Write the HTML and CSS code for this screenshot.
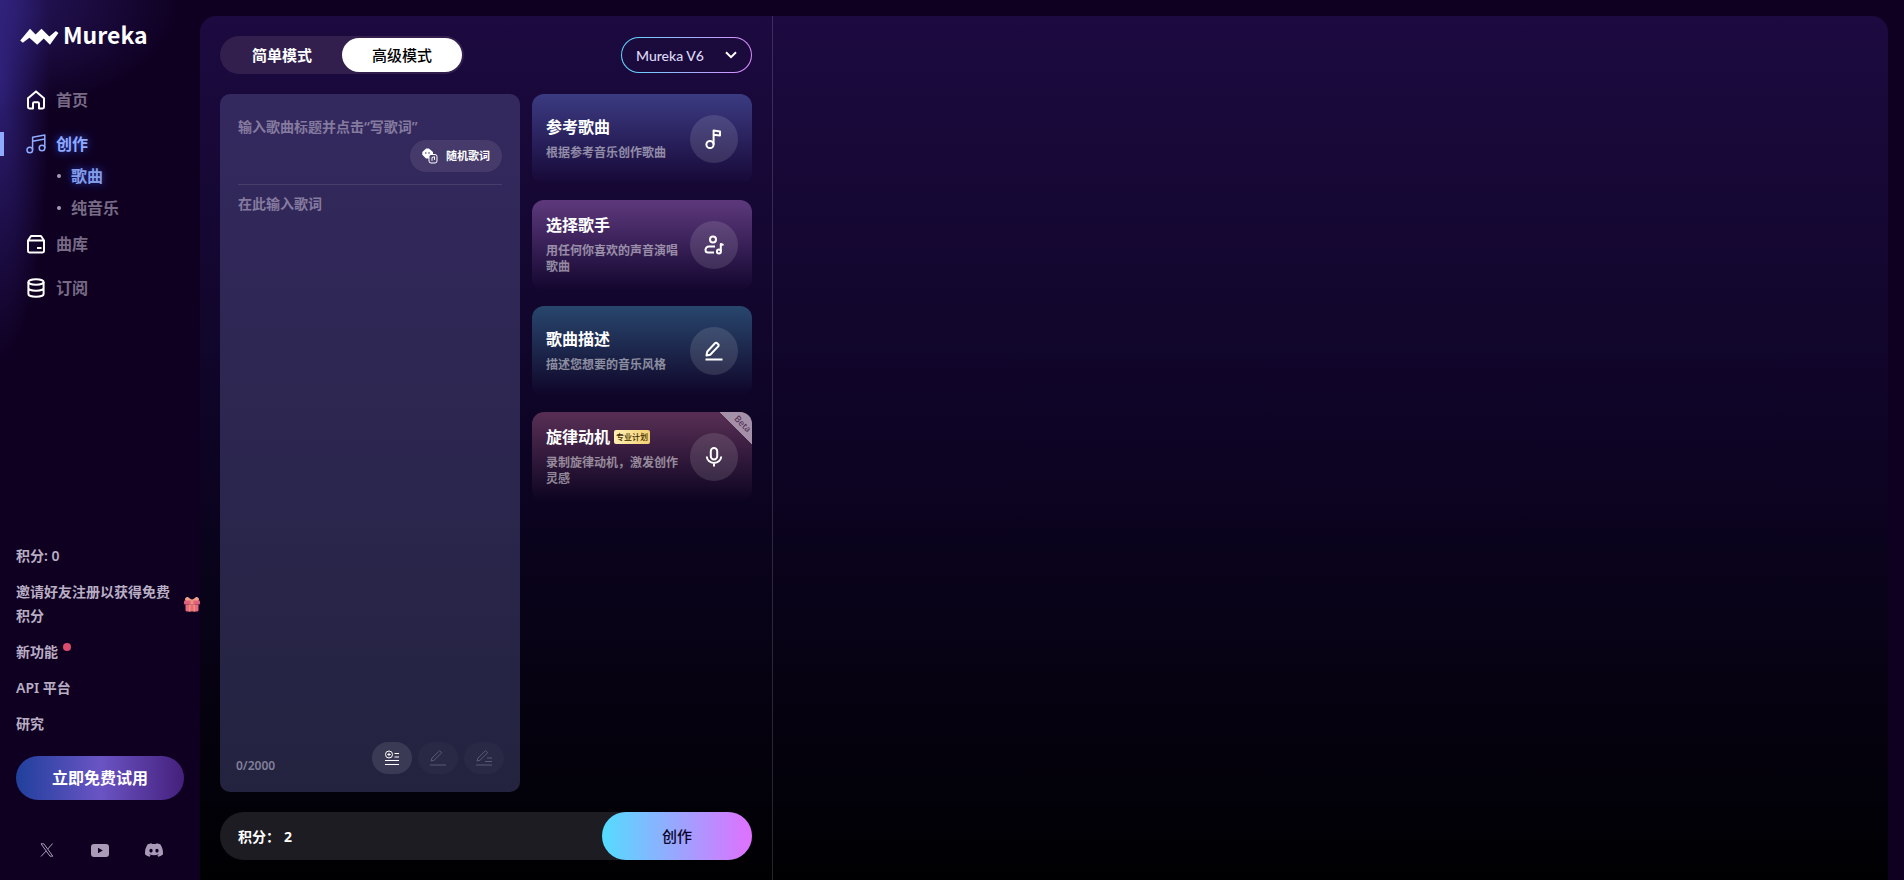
FILE: index.html
```html
<!DOCTYPE html>
<html lang="zh-CN">
<head>
    <meta charset="UTF-8">
    <meta name="viewport" content="width=device-width, initial-scale=1.0">
    <title>Mureka</title>
    <link rel="stylesheet" href="styles.css">
</head>
<body>
    <div class="app">
        <!-- 侧边栏 -->
        <aside class="sidebar">
            <a href="#" class="logo">
                <svg width="39" height="17" viewBox="60 82 118 52" fill="#fff"><path d="M60 120 90 84 107 102 125 84 149 108 169 91 177 97 151 133 132 114 112 133 88 112 68 127Z"/></svg>
                <span>Mureka</span>
            </a>
            <nav>
                <a href="#" class="nav-item">
                    <svg class="icon" viewBox="0 0 20 20"><path d="M2 8.2 10 1.4l8 6.8V17a1.4 1.4 0 0 1-1.4 1.4H13v-5a1.2 1.2 0 0 0-1.2-1.2H8.2A1.2 1.2 0 0 0 7 13.4v5H3.4A1.4 1.4 0 0 1 2 17Z"/></svg>
                    <span>首页</span>
                </a>
                <a href="#" class="nav-item active">
                    <svg class="icon" viewBox="0 0 20 20"><circle cx="3.8" cy="16" r="2.8"/><circle cx="16" cy="14" r="2.8"/><path d="M6.6 16V3.2L18.8 1v13M6.6 7.2 18.8 5"/></svg>
                    <span>创作</span>
                </a>
                <div class="sub-nav">
                    <a href="#" class="active">歌曲</a>
                    <a href="#">纯音乐</a>
                </div>
                <a href="#" class="nav-item">
                    <svg class="icon" viewBox="0 0 20 20"><path d="M2 6.5 5 2h10l3 4.5v10.6a1.4 1.4 0 0 1-1.4 1.4H3.4A1.4 1.4 0 0 1 2 17.1ZM2 6.5h16M11 14h4.5"/></svg>
                    <span>曲库</span>
                </a>
                <a href="#" class="nav-item">
                    <svg class="icon" viewBox="0 0 20 20"><ellipse cx="10" cy="4" rx="7.6" ry="2.8"/><path d="M2.4 4v12c0 1.6 3.4 2.8 7.6 2.8s7.6-1.2 7.6-2.8V4M2.4 10c0 1.6 3.4 2.8 7.6 2.8s7.6-1.2 7.6-2.8"/></svg>
                    <span>订阅</span>
                </a>
            </nav>
            <div class="side-links">
                <span>积分: 0</span>
                <a href="#" class="invite">
                    <span>邀请好友注册以获得免费积分</span>
                    <svg width="16" height="16" viewBox="0 0 16 16"><path fill="#f0a08c" d="M1 3.5C1 1.5 3 .5 4.5 1.5L8 4l3.5-2.5c1.5-1 3.5 0 3.5 2L14.5 5h-13Z"/><rect fill="#e0607c" y="4.5" width="16" height="4" rx="1"/><path fill="#e8687c" d="M1.5 8.5h13V14a1.5 1.5 0 0 1-1.5 1.5H3A1.5 1.5 0 0 1 1.5 14Z"/><path fill="#f09078" d="M6.5 3.5h3v5h-3ZM5 8.5h1.5v7H5ZM9.500 8.500H11v7H9.500Z"/></svg>
                </a>
                <a href="#" class="new-feature">新功能<i class="dot"></i></a>
                <a href="#">API 平台</a>
                <a href="#">研究</a>
            </div>
            <button class="trial-button">立即免费试用</button>
            <div class="social">
                <a href="#" aria-label="X"><svg width="14" height="14" viewBox="0 0 14 14" fill="none" stroke="#a99bb8"><path d="M1 .8h2.8l9 12.4H10ZM12.6.5 7.8 6M6.2 7.9 1 13.5"/></svg></a>
                <a href="#" aria-label="YouTube"><svg width="18" height="13" viewBox="0 0 18 13"><rect width="18" height="13" rx="3" fill="#a99bb8"/><path fill="#0f0022" d="M7 3.8v5.4l4.8-2.7Z"/></svg></a>
                <a href="#" aria-label="Discord"><svg width="18" height="18" viewBox="0 0 24 24" fill="#a99bb8"><path d="M20.317 4.3698a19.7913 19.7913 0 00-4.8851-1.5152.0741.0741 0 00-.0785.0371c-.211.3753-.4447.8648-.6083 1.2495-1.8447-.2762-3.68-.2762-5.4868 0-.1636-.3933-.4058-.8742-.6177-1.2495a.077.077 0 00-.0785-.037 19.7363 19.7363 0 00-4.8852 1.515.0699.0699 0 00-.0321.0277C.5334 9.0458-.319 13.5799.0992 18.0578a.0824.0824 0 00.0312.0561c2.0528 1.5076 4.0413 2.4228 5.9929 3.0294a.0777.0777 0 00.0842-.0276c.4616-.6304.8731-1.2952 1.226-1.9942a.076.076 0 00-.0416-.1057c-.6528-.2476-1.2743-.5495-1.8722-.8923a.077.077 0 01-.0076-.1277c.1258-.0943.2517-.1923.3718-.2914a.0743.0743 0 01.0776-.0105c3.9278 1.7933 8.18 1.7933 12.0614 0a.0739.0739 0 01.0785.0095c.1202.099.246.1981.3728.2924a.077.077 0 01-.0066.1276 12.2986 12.2986 0 01-1.873.8914.0766.0766 0 00-.0407.1067c.3604.698.7719 1.3628 1.225 1.9932a.076.076 0 00.0842.0286c1.961-.6067 3.9495-1.5219 6.0023-3.0294a.077.077 0 00.0313-.0552c.5004-5.177-.8382-9.6739-3.5485-13.6604a.061.061 0 00-.0312-.0286zM8.02 15.3312c-1.1825 0-2.1569-1.0857-2.1569-2.419 0-1.3332.9555-2.4189 2.157-2.4189 1.2108 0 2.1757 1.0952 2.1568 2.419 0 1.3332-.9555 2.4189-2.1569 2.4189zm7.9748 0c-1.1825 0-2.1569-1.0857-2.1569-2.419 0-1.3332.9554-2.4189 2.1569-2.4189 1.2108 0 2.1757 1.0952 2.1568 2.419 0 1.3332-.946 2.4189-2.1568 2.4189Z"/></svg></a>
            </div>
        </aside>

        <main>
            <!-- 创作表单 -->
            <section class="creator">
                <header>
                    <div class="mode-switch">
                        <button>简单模式</button>
                        <button class="active">高级模式</button>
                    </div>
                    <div class="model">
                        <select aria-label="模型">
                            <option>Mureka V6</option>
                        </select>
                        <svg width="12" height="8" viewBox="0 0 12 8" fill="none" stroke="#fff" stroke-width="2"><path d="m1 1.200 5 5 5-5"/></svg>
                    </div>
                </header>

                <div class="workspace">
                    <div class="lyrics">
                        <input type="text" aria-label="歌曲标题" placeholder="输入歌曲标题并点击“写歌词”">
                        <button class="random-button">
                            <svg width="16" height="16" viewBox="0 0 16 16"><path fill="#fff" d="M4.2.6h2.6L11 4v2.5L7 10.5H4L.3 6.8V4Z"/><circle cx="3.8" cy="5" r=".8" fill="#4c4170"/><circle cx="7" cy="5" r=".8" fill="#4c4170"/><rect x="7" y="6.5" width="8" height="8.5" rx="2" fill="#4c4170" stroke="#fff"/><path d="M10 12.8V9.5l2.5-.8v3.200" fill="none" stroke="#fff"/></svg>
                            随机歌词
                        </button>
                        <textarea aria-label="歌词" placeholder="在此输入歌词"></textarea>
                        <div class="lyrics-footer">
                            <span>0/2000</span>
                            <div class="tools">
                                <button aria-label="添加段落"><svg width="16" height="16" viewBox="0 0 16 16"><circle cx="5" cy="4.5" r="3.5"/><path d="M5 2.800v3.400M3.300 4.500h3.400M10.500 3.500H15M10.500 7H15M1 10.500h14M1 14.500h14"/></svg></button>
                                <button aria-label="续写" disabled><svg width="18" height="16" viewBox="0 0 18 16"><path d="M2 11 3 8l7.500-7.300 2.200 2L5 10.300ZM1 15h16"/></svg></button>
                                <button aria-label="改写" disabled><svg width="18" height="16" viewBox="0 0 18 16"><path d="M2 11 3 8l7.500-7.300 2.200 2L5 10.300ZM1 15h16M12 8h5M10 11.500h7"/></svg></button>
                            </div>
                        </div>
                    </div>

                    <div class="cards">
                        <div class="card reference">
                            <div class="card-text">
                                <h2>参考歌曲</h2>
                                <p>根据参考音乐创作歌曲</p>
                            </div>
                            <button aria-label="参考歌曲"><svg class="icon" viewBox="0 0 20 20"><circle cx="6" cy="15.5" r="3.6"/><path d="M9.6 15.5V1.5l6.4 1v4l-6.4-.8"/></svg></button>
                        </div>
                        <div class="card singer">
                            <div class="card-text">
                                <h2>选择歌手</h2>
                                <p>用任何你喜欢的声音演唱歌曲</p>
                            </div>
                            <button aria-label="选择歌手"><svg class="icon" viewBox="0 0 20 20"><circle cx="9" cy="4.5" r="3"/><path d="M11 11.5H5A3.5 3.5 0 0 0 1.5 15c0 1.6 1 2.5 2.5 2.5h6M16.8 16V9l2.700 1"/><circle cx="14.900" cy="16.400" r="2"/></svg></button>
                        </div>
                        <div class="card style">
                            <div class="card-text">
                                <h2>歌曲描述</h2>
                                <p>描述您想要的音乐风格</p>
                            </div>
                            <button aria-label="歌曲描述"><svg class="icon" viewBox="0 0 20 20"><path d="m2.5 14.5.8-4L11 2.2a1.5 1.5 0 0 1 2.2 0l1 1a1.5 1.5 0 0 1 0 2.200l-8 8.300ZM1.500 18.500h17"/></svg></button>
                        </div>
                        <div class="card melody">
                            <div class="card-text">
                                <h2>旋律动机<span class="plan">专业计划</span></h2>
                                <p>录制旋律动机，激发创作灵感</p>
                            </div>
                            <button aria-label="旋律动机"><svg class="icon" viewBox="0 0 20 20"><rect x="6.8" y="1" width="6.4" height="11.5" rx="3.2"/><path d="M2.8 9.5a7.2 6.5 0 0 0 14.4 0M10 16v3.5"/></svg></button>
                            <div class="beta"><span>Beta</span></div>
                        </div>
                    </div>
                </div>

                <div class="submit-bar">
                    <span>积分：</span>
                    <span class="cost">2</span>
                    <button>创作</button>
                </div>
            </section>
            <!-- 作品列表 -->
            <section class="works"></section>
        </main>
    </div>
</body>
</html>
```

FILE: styles.css
```css
* {
    box-sizing: border-box;
}

body {
    margin: 0;
    font-family: "Noto Sans", "Noto Sans CJK SC", sans-serif;
    font-size: 14px;
    color: #fff;
    background-color: #0f0022;
}

a {
    color: inherit;
    text-decoration: none;
}

button, input, textarea, select {
    font-family: inherit;
    color: inherit;
    border: none;
    padding: 0;
    margin: 0;
    background: none;
    outline: none;
}

button {
    line-height: 20px;
    cursor: pointer;
}

svg {
    flex-shrink: 0;
}

.icon {
    width: 20px;
    height: 20px;
    fill: none;
    stroke: #fff;
    stroke-width: 2;
    stroke-linejoin: round;
}

.app {
    display: flex;
    height: 100vh;
    min-height: 720px;
}

/* 侧边栏 */
.sidebar {
    width: 200px;
    flex-shrink: 0;
    display: flex;
    flex-direction: column;
    padding: 20px 0;
    background:
        radial-gradient(ellipse 50px 280px at 0 80px, #3a2c98b3, transparent),
        radial-gradient(ellipse 180px 110px at 0 0, #2c1c6ccc, transparent);
}

.logo {
    display: flex;
    align-items: center;
    gap: 4px;
    height: 32px;
    padding-left: 20px;
    font-family: "Noto Sans CJK SC", sans-serif;
    font-size: 23px;
    line-height: 28px;
    font-weight: 700;
}

.logo span {
    margin-bottom: 4px;
}

nav {
    margin-top: 36px;
}

.nav-item {
    display: flex;
    align-items: center;
    gap: 10px;
    height: 24px;
    margin-bottom: 20px;
    padding-left: 26px;
    font-size: 16px;
    line-height: 24px;
    font-weight: 600;
    color: #776a84;
}

.nav-item.active {
    margin-bottom: 8px;
    padding-left: 22px;
    border-left: 4px solid #8fabff;
    font-weight: 700;
    color: #8fabff;
    text-shadow: 0 0 8px #2c44c8;
}

.nav-item.active .icon {
    stroke: #8fabff;
    stroke-width: 1.5;
}

.sub-nav {
    display: flex;
    flex-direction: column;
    gap: 8px;
    margin-bottom: 12px;
    padding-left: 56px;
    font-size: 16px;
    line-height: 24px;
    font-weight: 600;
    color: #776a84;
}

.sub-nav a {
    display: flex;
    align-items: center;
    gap: 10px;
}

.sub-nav a::before {
    content: "";
    width: 4px;
    height: 4px;
    margin-left: 1px;
    border-radius: 50%;
    background-color: #a99bb8;
}

.sub-nav .active {
    color: #839ce8;
    text-shadow: 0 0 8px #2438a8;
}

.side-links {
    display: flex;
    flex-direction: column;
    gap: 12px;
    margin-top: auto;
    padding-left: 16px;
    line-height: 24px;
    font-weight: 600;
    color: #b9aec4;
}

.invite {
    display: flex;
    align-items: center;
    gap: 8px;
}

.new-feature {
    display: flex;
}

.dot {
    width: 8px;
    height: 8px;
    margin: 3px 0 0 5px;
    border-radius: 50%;
    background-color: #dc4c6c;
}

.trial-button {
    height: 44px;
    flex-shrink: 0;
    margin: 20px 16px 0;
    border-radius: 22px;
    background: linear-gradient(90deg, #20409c, #6a54c4 50%, #45207c);
    font-size: 16px;
    font-weight: 700;
}

.social {
    display: flex;
    align-items: center;
    justify-content: space-between;
    height: 20px;
    margin-top: 40px;
    padding: 0 37px 0 40px;
}

.social a {
    display: flex;
}

/* 主区域 */
main {
    flex: 1;
    display: flex;
    margin: 16px 16px 0 0;
    border-radius: 16px 16px 0 0;
    background: linear-gradient(180deg, #1c0a40, #0d0424 50%, #000002);
}

.creator {
    width: 573px;
    flex-shrink: 0;
    display: flex;
    flex-direction: column;
    gap: 20px;
    padding: 20px;
    border-right: 1px solid #ffffff26;
}

.works {
    flex: 1;
}

header {
    display: flex;
    align-items: center;
    justify-content: space-between;
    height: 38px;
}

.mode-switch {
    display: flex;
    padding: 2px;
    border-radius: 19px;
    background-color: #321f4e;
}

.mode-switch button {
    width: 120px;
    height: 34px;
    border-radius: 17px;
    font-size: 15px;
    font-weight: 700;
}

.mode-switch .active {
    background-color: #fff;
    font-weight: 500;
    color: #000;
}

.model {
    position: relative;
}

.model select {
    appearance: none;
    width: 131px;
    height: 36px;
    padding-left: 14px;
    border: 1px solid transparent;
    border-radius: 18px;
    background: linear-gradient(#1b0a3c, #1b0a3c) padding-box, linear-gradient(90deg, #5cd8ff, #e08cff) border-box;
    font-family: Lato, sans-serif;
    font-size: 14px;
    font-weight: 500;
    color: #dcd8f4;
}

.model svg {
    position: absolute;
    top: 14px;
    right: 15px;
    pointer-events: none;
}

.workspace {
    flex: 1;
    display: flex;
    gap: 12px;
    min-height: 0;
}

/* 歌词 */
.lyrics {
    flex: 1;
    display: flex;
    flex-direction: column;
    padding: 20px 18px 18px;
    border-radius: 10px;
    background: linear-gradient(180deg, #34295f, #23233f);
}

.lyrics input {
    height: 24px;
    font-size: 14px;
}

.lyrics ::placeholder {
    color: #857b9f;
    font-weight: 600;
    opacity: 1;
}

.random-button {
    display: flex;
    align-items: center;
    justify-content: center;
    gap: 8px;
    align-self: flex-end;
    width: 92px;
    height: 32px;
    flex-shrink: 0;
    margin: 2px 0 12px;
    border-radius: 16px;
    background-color: #453a6a;
    font-size: 11px;
    font-weight: 700;
}

.lyrics textarea {
    flex: 1;
    padding-top: 7px;
    border-top: 1px solid #ffffff1a;
    font-size: 14px;
    line-height: 24px;
    resize: none;
}

.lyrics-footer {
    display: flex;
    align-items: flex-end;
    justify-content: space-between;
    margin: 0 -2px;
    font-size: 12px;
    line-height: 16px;
    font-weight: 600;
    color: #817f9a;
}

.tools {
    display: flex;
    gap: 6px;
}

.tools button {
    display: flex;
    align-items: center;
    justify-content: center;
    width: 40px;
    height: 32px;
    border-radius: 16px;
    background-color: #3b3a55;
}

.tools svg {
    fill: none;
    stroke: #fff;
}

.tools button:disabled {
    background-color: #2a2945;
}

.tools button:disabled svg {
    stroke: #5b5972;
}

/* 功能卡片 */
.cards {
    display: flex;
    flex-direction: column;
    gap: 16px;
    width: 220px;
}

.card {
    position: relative;
    display: flex;
    align-items: center;
    gap: 12px;
    height: 90px;
    padding: 0 14px;
    border-radius: 12px;
}

.reference { background: linear-gradient(180deg, #3b3b82, transparent); }
.singer { background: linear-gradient(180deg, #5d397c, transparent); }
.style { background: linear-gradient(180deg, #28466c, transparent); }
.melody { background: linear-gradient(180deg, #582f54, transparent); }

.card-text {
    flex: 1;
}

.card h2 {
    display: flex;
    align-items: center;
    gap: 4px;
    margin: 0 0 8px;
    font-size: 16px;
    line-height: 20px;
    font-weight: 700;
}

.card p {
    margin: 0;
    font-size: 12px;
    line-height: 16px;
    font-weight: 600;
    color: #ffffff80;
}

.card button {
    display: flex;
    align-items: center;
    justify-content: center;
    width: 48px;
    height: 48px;
    border-radius: 50%;
    background-color: #ffffff1f;
}

.plan {
    width: 36px;
    border-radius: 2px;
    background: linear-gradient(90deg, #fff0b4, #f4d070);
    font-size: 8px;
    line-height: 14px;
    font-weight: 500;
    text-align: center;
    color: #3c2800;
}

.beta {
    position: absolute;
    top: 0;
    right: 0;
    display: flex;
    justify-content: flex-end;
    width: 32px;
    height: 32px;
    padding: 5px 0 0;
    border-top-right-radius: 12px;
    background: linear-gradient(45deg, transparent 50%, #a590a9 50%);
    font-size: 9px;
    line-height: 14px;
    color: #4c2c50;
}

.beta span {
    height: 14px;
    transform: rotate(45deg);
}

/* 底部提交栏 */
.submit-bar {
    display: flex;
    align-items: center;
    height: 48px;
    flex-shrink: 0;
    padding-left: 18px;
    border-radius: 24px;
    background-color: #1d1c22;
    font-weight: 700;
}

.cost {
    margin-left: 4px;
}

.submit-bar button {
    width: 150px;
    height: 48px;
    margin-left: auto;
    border-radius: 24px;
    background: linear-gradient(90deg, #54dcff, #a0a0ff 55%, #e070ff);
    font-size: 15px;
    font-weight: 500;
    color: #0c0428;
}
```
